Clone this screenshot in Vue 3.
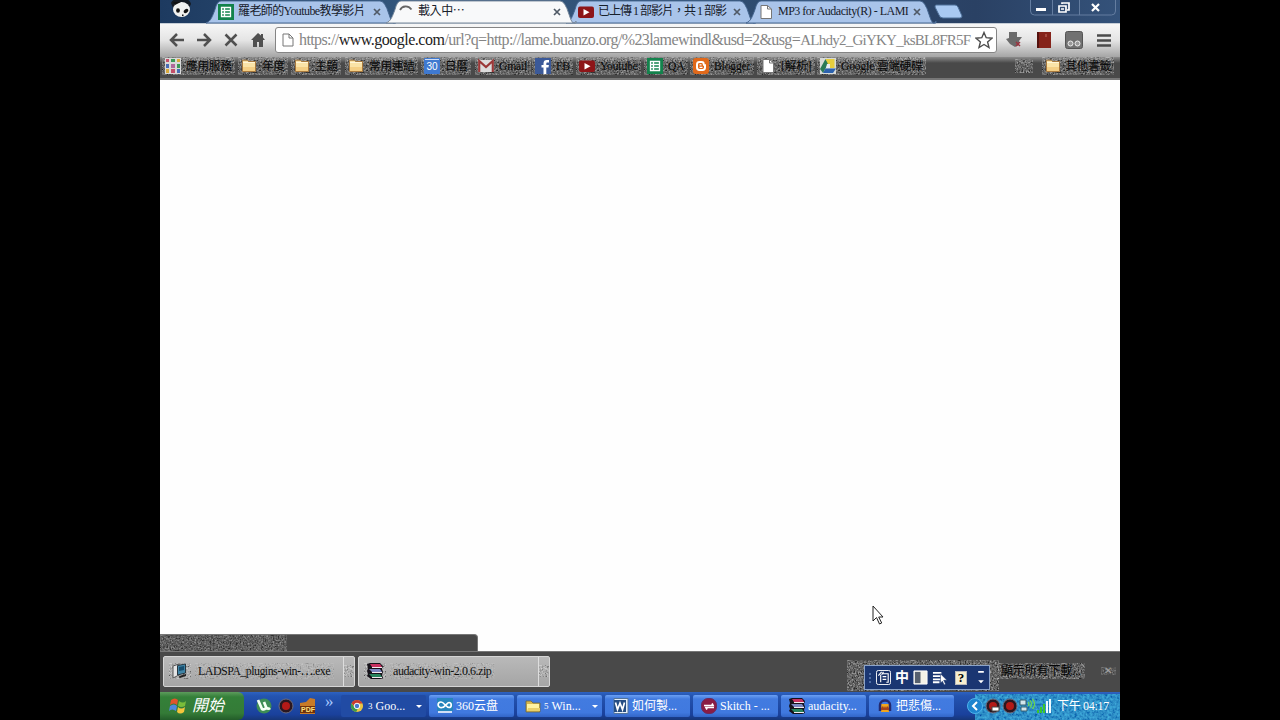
<template>
  <div class="screen">
    <svg class="sprite" width="0" height="0" aria-hidden="true">
      <defs>
        <filter id="grain" x="0" y="0" width="100%" height="100%">
          <feTurbulence type="fractalNoise" baseFrequency="0.6" numOctaves="2" seed="8" />
          <feColorMatrix
            values="2.4 0 0 0 -0.75  2.4 0 0 0 -0.75  2.4 0 0 0 -0.75  0 2.2 0 0 -0.5"
          />
        </filter>
        <filter id="grain-blue" x="0" y="0" width="100%" height="100%">
          <feTurbulence type="fractalNoise" baseFrequency="0.4" numOctaves="2" seed="3" />
          <feColorMatrix
            values="0.2 0 0 0 -0.05  1 0 0 0 -0.12  0.9 0 0 0 0.2  0 0 0 0 0.6"
          />
        </filter>
      </defs>
      <symbol id="sheet" viewBox="0 0 16 16">
        <path fill="#13824c" d="M0 0h16v16H0z" />
        <path fill="none" stroke="#fff" stroke-width="1.3" d="M3.5 3.5h9v9h-9zM3.5 6.5h9M3.5 9.5h9M6.5 3.5v9" />
      </symbol>
      <symbol id="spin" viewBox="0 0 16 16">
        <path fill="none" stroke="#666" stroke-width="1.8" d="M2 6C4 1.8 10 1 13.5 5.5" />
      </symbol>
      <symbol id="youtube" viewBox="0 0 16 16">
        <rect y="2.5" width="16" height="11.5" rx="2" fill="#8d1518" />
        <path fill="#fff" d="M5.5 5l6 3.2-6 3.3z" />
      </symbol>
      <symbol id="page" viewBox="0 0 16 16">
        <path fill="#fff" stroke="#777" d="M3 1.5h6.5L13.5 5v9.5H3z" />
        <path fill="none" stroke="#777" d="M9.5 1.5V5h4" />
      </symbol>
      <symbol id="apps" viewBox="0 0 16 16">
        <path fill="#d9d9d9" d="M0 0h16v16H0z" />
        <path fill="#c4506a" d="M1 1h3v3H1zM6 11h4v4H6z" />
        <path fill="#3a9a55" d="M6 1h4v3H6zM12 6h3v4h-3z" />
        <path fill="#d8a93c" d="M12 1h3v3h-3zM1 11h3v4H1z" />
        <path fill="#486db5" d="M1 6h3v4H1zM12 11h3v4h-3z" />
        <path fill="#b06a9c" d="M6 6h4v4H6z" />
      </symbol>
      <symbol id="folder" viewBox="0 0 16 16">
        <path fill="#fae3a7" stroke="#a9793c" d="M1.5 3.5V2.2h5l1 1.3h7v10h-13z" />
        <path fill="#f4cf85" d="M2 9h12v4H2z" />
        <path stroke="#fff6d8" d="M2 4.5h12" />
      </symbol>
      <symbol id="cal" viewBox="0 0 16 16">
        <rect width="16" height="16" rx="1" fill="#3f79d0" />
        <path fill="#cfdef7" d="M1 1h14v1H1z" />
      </symbol>
      <symbol id="gmail" viewBox="0 0 16 16">
        <path fill="#ddd" d="M0 2h16v12H0z" />
        <path fill="none" stroke="#9b3838" stroke-width="2.2" d="M1.2 14V3L8 9l6.8-6v11" />
      </symbol>
      <symbol id="facebook" viewBox="0 0 16 16">
        <path fill="#3b5998" d="M0 0h16v16H0z" />
        <path fill="#fff" d="M8.5 16V9.5h-2V7h2V5.4C8.5 3.2 9.7 2 11.7 2H14v2.5h-1.4c-1 0-1.3.4-1.3 1.2V7h2.6l-.4 2.5h-2.2V16z" />
      </symbol>
      <symbol id="blogger" viewBox="0 0 16 16">
        <rect width="16" height="16" rx="3" fill="#e0691b" />
        <path fill="none" stroke="#fff" stroke-width="2" d="M6.5 4h2.2c1.3 0 2 .8 2 2.2 0 .8.3 1 1.3 1v2.4c0 1.5-1 2.4-2.4 2.4H6.5C5 12 4 11 4 9.6V6.4C4 5 5 4 6.5 4z" />
        <path stroke="#fff" stroke-width="1.2" d="M6.5 6.8h2M6.5 9.3h3" />
      </symbol>
      <symbol id="drive" viewBox="0 0 16 16">
        <path fill="#d7dad8" d="M0 0h16v16H0z" />
        <path fill="#2b7a57" d="M5.5 1L0 11l3 4 5.5-10z" />
        <path fill="#e6cd3d" d="M5.5 1h9v9H10z" />
        <path fill="#2c62ae" d="M5.5 10.5H16L13 15H3z" />
        <path fill="#e9eef2" d="M7 6h3v4H6z" />
      </symbol>
      <symbol id="disc" viewBox="0 0 16 16">
        <path fill="#e4e4e4" stroke="#555" d="M1 3l6-2v11l-6 3z" />
        <path fill="#3f84a6" stroke="#273640" d="M5.5 2.5l8-1.5v9l-8 2z" />
        <path fill="#174e6e" d="M7 4l5-1v4L7 8z" />
        <path fill="#222" d="M7 13l7-2v2l-6 2z" />
      </symbol>
      <symbol id="books" viewBox="0 0 16 16">
        <path fill="#16121a" d="M0 1l3-1h10l3 3-1 3 1 3-1 3 1 3-3 1H4l-4-3 1-2-1-3 1-3z" />
        <path fill="#c73160" d="M3 1h10l2 3H5z" />
        <path fill="#f4eaf0" d="M5 4h10v1H5zM5 9h10v1H5zM5 14h10v1H5z" />
        <path fill="#7a86c0" d="M2 6h11l2 3H5z" />
        <path fill="#27845d" d="M2 11h11l2 3H5z" />
      </symbol>
      <symbol id="utorrent" viewBox="0 0 16 16">
        <circle cx="8" cy="8" r="7.5" fill="#3d8d55" />
        <path fill="none" stroke="#f4fff4" stroke-width="2.7" d="M2 2l4 9c2 1 4 0 4-2L8 4M10 9c1 2 3 2 4 1" />
      </symbol>
      <symbol id="rec" viewBox="0 0 16 16">
        <circle cx="8" cy="8" r="7" fill="#2b1720" stroke="#6b6c80" />
        <circle cx="8" cy="8" r="4" fill="#b31a18" />
      </symbol>
      <symbol id="pdf" viewBox="0 0 16 16">
        <path fill="#c97b26" d="M0 5l6-1 4-4 5 1v15H0z" />
        <path fill="#70310b" d="M0 8h15v7H0z" />
      </symbol>
      <symbol id="chrome" viewBox="0 0 16 16">
        <g transform="translate(1.5 1.5) scale(.81)">
          <circle cx="8" cy="8" r="7.5" fill="#e8c644" />
          <path fill="#c83b30" d="M1.3 4.5A7.5 7.5 0 0114.8 5H8L5 9z" />
          <path fill="#3d9a4b" d="M1.3 4.5L5 10l4 1-2 4.4A7.5 7.5 0 011.3 4.5z" />
          <circle cx="8" cy="8" r="3.4" fill="#4879cc" stroke="#fff" stroke-width="1.2" />
        </g>
      </symbol>
      <symbol id="cloud" viewBox="0 0 16 16">
        <path fill="#2786bc" d="M0 0h16v13H0z" />
        <path fill="none" stroke="#fff" stroke-width="1.7" d="M5 9.5C0 10 0 4 4 4c3 0 5 5.5 8 5.5s3-5 0-5c-2 0-4 5-7 5zM1 14h14" />
      </symbol>
      <symbol id="xpfolder" viewBox="0 0 16 16">
        <path fill="#d7b74d" stroke="#6b6540" stroke-width=".8" d="M1 3h5l2 2h7v9H1z" />
        <path fill="#fff3a0" d="M2 6h12v7H2z" />
        <path fill="#e9d06a" d="M3 10h12v3H2z" />
      </symbol>
      <symbol id="word" viewBox="0 0 16 16">
        <path fill="#e5eef8" stroke="#53749b" d="M1 .5h14v15H1z" />
        <path fill="#254d83" d="M1 2h12v12H1z" />
        <path fill="none" stroke="#fff" stroke-width="1.7" d="M2.5 4.5l2 7 2.5-6.5 2.5 6.5 2-7" />
      </symbol>
      <symbol id="skitch" viewBox="0 0 16 16">
        <rect x=".5" y=".5" width="15" height="15" rx="6.5" fill="#8a1c44" stroke="#6b2a5e" />
        <path fill="none" stroke="#fff" stroke-width="1.7" d="M3 7.5h9l-1-2M13 9.5H5l1 2" />
      </symbol>
      <symbol id="audacity" viewBox="0 0 16 16">
        <path fill="#f1a51d" d="M4 6h8v8H4z" />
        <path fill="none" stroke="#252a6e" stroke-width="2.5" d="M3 13V7C3 1 13 1 13 7v6" />
        <path fill="#a7431a" d="M4 10l2-2 1 2 1-2 1 2 1-2 2 2v2H4z" />
      </symbol>
    </svg>

    <div class="desktop">
      <header class="tabstrip">
        <svg class="avatar" viewBox="0 0 24 20">
          <path fill="#141a22" d="M2 3C5-4 20-4 22 4l-2 4H4z" />
          <ellipse cx="12.5" cy="9.5" rx="8.5" ry="7.5" fill="#f1f1ef" />
          <ellipse cx="9" cy="10.5" rx="1.9" ry="2.3" fill="#111" />
          <ellipse cx="17" cy="11" rx="2.6" ry="1.8" fill="#111" transform="rotate(-35 17 11)" />
          <path fill="#111" d="M13 14.5h1.5V16H13zM4 2h8L6 5z" />
        </svg>
        <div
          v-for="tab in tabs"
          :key="tab.title"
          class="tab"
          :class="{ active: tab.active }"
          :style="{ width: tab.width + 'px' }"
        >
          <svg class="tab-shape" :viewBox="`0 0 ${tab.width} 24`" preserveAspectRatio="none">
            <path
              :d="`M-2 24C3 22 4 18 7 10Q9 1 13 1H${tab.width - 8}Q${tab.width - 3} 1 ${tab.width + 1} 15T${tab.width + 8} 22V24Z`"
            />
          </svg>
          <svg class="ico"><use :href="'#' + tab.icon" /></svg>
          <span class="tab-title" :style="{ letterSpacing: tab.spacing + 'px' }">{{ tab.title }}</span>
          <svg class="tab-close" viewBox="0 0 8 8"><path d="M1 1l6 6M7 1L1 7" /></svg>
        </div>
        <svg class="new-tab" viewBox="0 0 30 15"><path d="M3 1h19q2 0 3 2l4 9q0 2-2 2H10q-3 0-4-3L2 3q0-2 1-2z" /></svg>
        <div class="win-btns">
          <svg viewBox="0 0 86 16">
            <path class="sep" d="M.5 0v11q0 4 4 4h77q4 0 4-4V0M22.5 0v15M49.5 0v15" />
            <path fill="#fff" d="M6 8h10v3H6z" />
            <path fill="none" stroke="#fff" stroke-width="1.7" d="M32 4V3h7v7h-2M29 6h7v6h-7zM31 9h3" />
            <path stroke="#fff" stroke-width="2.2" d="M62 4l7 7M69 4l-7 7" />
          </svg>
        </div>
      </header>

      <div class="toolbar">
        <svg class="nav" viewBox="0 0 16 16"><path d="M8 2L2 8l6 6M2 8h13" /></svg>
        <svg class="nav" viewBox="0 0 16 16"><path d="M8 2l6 6-6 6M14 8H1" /></svg>
        <svg class="nav" viewBox="0 0 16 16"><path d="M2.5 2.5l11 11M13.5 2.5l-11 11" /></svg>
        <svg class="nav home" viewBox="0 0 16 16"><path d="M8 1L1 8h2v7h4v-5h2v5h4V8h2l-2-2.5V2h-2v1.5z" /></svg>
        <div class="omnibox">
          <svg class="doc" viewBox="0 0 12 14">
            <path d="M1 1h6l4 4v8H1z" />
            <path d="M7 1v4h4" />
          </svg>
          <span class="url">https://<b>www.google.com</b>/url?q=http://lame.buanzo.org/%23lamewindl&amp;usd=2&amp;usg=<span class="token">ALhdy2_GiYKY_ksBL8FR5F</span></span>
          <svg class="star" viewBox="0 0 18 18"><path d="M9 1.5l2.2 5.2 5.8.5-4.4 3.7 1.4 5.6L9 13.5l-5 3 1.4-5.6L1 7.2l5.8-.5z" /></svg>
        </div>
        <svg class="ext" viewBox="0 0 18 18">
          <path fill="#6b6b6b" d="M4 1h8v5h5l-3 4v4l-4 2-5-3-4-5 3-1z" />
          <path stroke="#9b3440" stroke-width="1.5" d="M11 11l4 4M15 11l-4 4" />
        </svg>
        <svg class="ext" viewBox="0 0 18 18">
          <path fill="#85231a" d="M2 1h14v16H2z" />
          <path fill="#54120e" d="M2 1h2v16H2z" />
          <path fill="#a5483e" d="M10 3h2v3h-2z" />
        </svg>
        <svg class="ext" viewBox="0 0 18 18">
          <rect x=".5" y=".5" width="17" height="17" rx="2" fill="#717171" stroke="#555" />
          <circle cx="5.5" cy="12.5" r="2.5" fill="#999" stroke="#eee" />
          <circle cx="12.5" cy="12.5" r="2.5" fill="#999" stroke="#eee" />
        </svg>
        <svg class="ext menu" viewBox="0 0 18 18"><path d="M2 4.5h14M2 9.5h14M2 14.5h14" /></svg>
      </div>

      <nav class="bookmarks">
        <div
          v-for="item in bookmarks"
          :key="item.label"
          class="bookmark"
          :style="{ width: item.width + 'px' }"
        >
          <span class="mark grainy">
            <span class="ico-box">
              <svg class="ico"><use :href="'#' + item.icon" /></svg>
              <em v-if="item.badge">{{ item.badge }}</em>
            </span>
            <span>{{ item.label }}</span>
          </span>
        </div>
        <span class="overflow grainy"></span>
        <span class="mark grainy other">
          <svg class="ico"><use href="#folder" /></svg>
          <span>其他書籤</span>
        </span>
      </nav>

      <main class="page">
        <div class="status grainy"></div>
        <svg class="cursor" viewBox="0 0 12 20">
          <path d="M1 1v15l3.5-3.5 3 6.5 2.2-1-3-6H11z" />
        </svg>
      </main>

      <footer class="downloads">
        <div v-for="file in files" :key="file.name" class="file">
          <span class="file-icon grainy"><svg class="ico"><use :href="'#' + file.icon" /></svg></span>
          <span class="file-name grainy" :style="{ letterSpacing: file.spacing + 'px' }">{{ file.name }}</span>
          <span class="file-more"><span class="grainy"></span></span>
        </div>
        <span class="show-all grainy">顯示所有下載...</span>
        <span class="dismiss grainy">✕</span>
        <div class="ime-wrap grainy">
          <div class="ime">
            <i class="grip"></i>
            <svg viewBox="0 0 16 16">
              <rect x=".5" y=".5" width="15" height="15" rx="2" fill="#183068" stroke="#fff" />
              <path fill="none" stroke="#fff" stroke-width="1.2" d="M6 2L2.5 6M5 5v8M7 4h6v9h-2M7 7h4M7 10h4M8 2L6 5" />
            </svg>
            <b>中</b>
            <svg viewBox="0 0 16 16">
              <path fill="#f4f2e8" stroke="#fff" d="M1 1h14v14H1z" />
              <path fill="#56606e" d="M2 2h6v12H2z" />
            </svg>
            <svg viewBox="0 0 16 16">
              <path stroke="#fff" stroke-width="2" d="M1 3h9M1 6.5h9M1 10h9M1 13h7" />
              <path fill="#fff" stroke="#183068" stroke-width=".6" d="M9 4v10l2-2 2 4 1.5-1-2-4H16z" />
            </svg>
            <span class="help">?</span>
            <svg class="ime-more" viewBox="0 0 8 16"><path fill="#fff" d="M1 1h6v2H1zM1 11h6l-3 3z" /></svg>
          </div>
        </div>
      </footer>

      <div class="taskbar">
        <div class="start">
          <svg viewBox="0 0 18 18">
            <path fill="#e2542b" d="M2 3q4-3 7 0L8 8Q5 5 1 8z" />
            <path fill="#78bd3a" d="M10 4q4 3 7 0l-1 5q-4 2-7 0z" />
            <path fill="#5088de" d="M1 9q4-3 7 0l-1 5q-4-3-7 0z" />
            <path fill="#f4c53c" d="M9 10q3 3 7 0l-1 5q-4 3-7 0z" />
          </svg>
          <span>開始</span>
        </div>
        <div class="quick">
          <svg class="ico"><use href="#utorrent" /></svg>
          <svg class="ico"><use href="#rec" /></svg>
          <span class="ico-box">
            <svg class="ico"><use href="#pdf" /></svg>
            <em class="pdf">PDF</em>
          </span>
          <span class="more">»</span>
        </div>
        <div class="tasks">
          <div v-for="task in tasks" :key="task.label" class="task" :class="{ pressed: task.pressed }">
            <svg class="ico"><use :href="'#' + task.icon" /></svg>
            <small v-if="task.count">{{ task.count }}</small>
            <span>{{ task.label }}</span>
            <i v-if="task.count" class="caret"></i>
          </div>
        </div>
        <div class="tray">
          <svg class="chev" viewBox="0 0 16 16">
            <circle cx="8" cy="8" r="7.5" fill="#1d84cf" stroke="#4eb3ea" />
            <path fill="none" stroke="#fff" stroke-width="2" d="M10 4L6 8l4 4" />
          </svg>
          <svg class="ico"><use href="#rec" /><path fill="#fff" stroke="#444" d="M7 9h7v4H7z" /></svg>
          <svg class="ico"><use href="#rec" /></svg>
          <svg class="ico" viewBox="0 0 16 16">
            <path fill="#d3e5ec" stroke="#355c6d" d="M1 2h6v5H1zM2 9h6v4H2z" />
            <path fill="none" stroke="#69d257" stroke-width="1.3" d="M9 4q2 2 0 4M11 2.5q3 3.5 0 7M13.5 1q4 5 0 10" />
          </svg>
          <svg class="ico" viewBox="0 0 16 16">
            <path stroke="#39c62b" stroke-width="2" d="M2 15v-3M5 15V9M8 15V6" />
            <path stroke="#effaff" stroke-width="2" d="M11 15V3M14 15V1" />
          </svg>
          <span class="clock">下午 04:17</span>
        </div>
      </div>
    </div>
  </div>
</template>

<script setup>
const tabs = [
  { icon: "sheet", title: "羅老師的Youtube教學影片", width: 180, spacing: -0.6 },
  { icon: "spin", title: "載入中⋯", width: 180, spacing: -0.4, active: true },
  { icon: "youtube", title: "已上傳 1 部影片，共 1 部影", width: 180, spacing: -1 },
  { icon: "page", title: "MP3 for Audacity(R) - LAMI", width: 180, spacing: -0.5 },
];

// width: distance to the next bookmark
const bookmarks = [
  { icon: "apps", label: "應用服務", width: 76 },
  { icon: "folder", label: "年度", width: 53 },
  { icon: "folder", label: "主題", width: 54 },
  { icon: "folder", label: "常用連結", width: 76 },
  { icon: "cal", label: "日曆", width: 54, badge: "30" },
  { icon: "gmail", label: "Gmail", width: 57 },
  { icon: "facebook", label: "FB", width: 44 },
  { icon: "youtube", label: "Youtube", width: 68 },
  { icon: "sheet", label: "QA", width: 46 },
  { icon: "blogger", label: "Blogger", width: 67 },
  { icon: "page", label: "[解析]", width: 60 },
  { icon: "drive", label: "Google 雲端硬碟", width: 102 },
];

const files = [
  { icon: "disc", name: "LADSPA_plugins-win-⋯.exe", spacing: -0.55 },
  { icon: "books", name: "audacity-win-2.0.6.zip", spacing: -0.45 },
];

const tasks = [
  { icon: "chrome", count: "3", label: "Goo...", pressed: true },
  { icon: "cloud", label: "360云盘" },
  { icon: "xpfolder", count: "5", label: "Win..." },
  { icon: "word", label: "如何製..." },
  { icon: "skitch", label: "Skitch - ..." },
  { icon: "books", label: "audacity..." },
  { icon: "audacity", label: "把悲傷..." },
];
</script>

<style>
body {
  background: #000;
  overflow: hidden;
}
</style>

<style scoped>
* {
  box-sizing: border-box;
}
.screen {
  width: 1280px;
  height: 720px;
  background: #000;
  display: flex;
  justify-content: center;
  font-family: "Liberation Serif", "Noto Sans CJK TC", serif;
  font-size: 12px;
  line-height: 16px;
  white-space: nowrap;
}
.sprite {
  position: absolute;
}
svg {
  flex-shrink: 0;
}
.ico {
  width: 16px;
  height: 16px;
}
.ico-box {
  position: relative;
  display: flex;
}
.ico-box em {
  position: absolute;
  left: 0;
  top: 1px;
  width: 16px;
  color: #fff;
  font: 10px/15px "Liberation Sans", sans-serif;
  letter-spacing: 0;
  text-align: center;
}
.ico-box .pdf {
  top: 4px;
  color: #ffe17c;
  font-size: 7px;
  font-weight: 700;
}
.desktop {
  width: 960px;
  height: 720px;
  display: flex;
  flex-direction: column;
  overflow: hidden;
  background: #fff;
}
.grainy {
  position: relative;
  isolation: isolate;
}
.grainy::before {
  content: "";
  position: absolute;
  inset: 0 -3px;
  z-index: -1;
  filter: url(#grain);
  opacity: 0.5;
}

/* tabs */
.tabstrip {
  height: 23px;
  display: flex;
  background: linear-gradient(90deg, #1d3a60, #35597f 28%, #2d496d 70%, #2a4164 85%, #34527a);
}
.avatar {
  width: 24px;
  height: 20px;
  margin: 0 15px 0 9px;
}
.tab {
  position: relative;
  display: flex;
  align-items: center;
  padding: 0 7px 0 10px;
  color: #17202b;
}
.tab.active {
  z-index: 2;
}
.tab-shape {
  position: absolute;
  left: 0;
  top: 0;
  width: 100%;
  height: 23px;
  overflow: visible;
}
.tab-shape path {
  fill: #a9c4ea;
  stroke: #45658f;
  stroke-width: 1;
}
.tab.active .tab-shape path {
  fill: #f8f9fa;
  stroke: #75869a;
}
.tab .ico {
  position: relative;
}
.tab-title {
  position: relative;
  flex: 1;
  width: 0;
  padding-left: 4px;
  margin-top: -1px;
  font-size: 12px;
}
.tab-close {
  position: relative;
  width: 8px;
  height: 8px;
  margin-top: 1px;
}
.tab-close path {
  stroke: #505a66;
  stroke-width: 1.7;
}
.new-tab {
  width: 30px;
  height: 15px;
  margin: 4px 0 0 5px;
}
.new-tab path {
  fill: #a9c9f1;
  stroke: #4e7099;
}
.win-btns {
  margin: 0 4px 0 auto;
  height: 16px;
}
.win-btns svg {
  width: 86px;
  height: 16px;
}
.sep {
  fill: none;
  stroke: #647da0;
}

/* toolbar */
.toolbar {
  height: 34px;
  display: flex;
  align-items: center;
  padding: 0 5px 1px 9px;
  background: linear-gradient(#f7f7f7, #e4e4e4 50%, #a5a5a5);
  border-top: 1px solid #c5cdd6;
}
.nav {
  width: 16px;
  height: 16px;
  margin-right: 11px;
}
.nav path {
  fill: none;
  stroke: #505050;
  stroke-width: 2.5;
}
.nav.home {
  margin-right: 9px;
}
.nav.home path {
  fill: #505050;
  stroke: none;
}
.omnibox {
  width: 722px;
  height: 26px;
  display: flex;
  align-items: center;
  background: #fff;
  border: 1px solid #858585;
  border-radius: 3px;
  padding: 0 3px 0 6px;
}
.doc {
  width: 12px;
  height: 14px;
}
.doc path {
  fill: none;
  stroke: #777;
}
.url {
  flex: 1;
  width: 0;
  margin-left: 5px;
  font-size: 16px;
  line-height: 22px;
  letter-spacing: -0.6px;
  color: #858585;
}
.url b {
  font-weight: 400;
  letter-spacing: -0.5px;
  color: #222;
}
.token {
  font-size: 15px;
  letter-spacing: -0.75px;
}
.star {
  width: 18px;
  height: 18px;
}
.star path {
  fill: #fff;
  stroke: #4d4d4d;
  stroke-width: 1.4;
}
.ext {
  width: 18px;
  height: 18px;
  margin-left: 12px;
}
.omnibox + .ext {
  margin-left: 8px;
}
.menu path {
  stroke: #4b4b4b;
  stroke-width: 2.5;
}

/* bookmarks */
.bookmarks {
  height: 23px;
  display: flex;
  align-items: center;
  padding: 0 9px 3px 5px;
  color: #080808;
  background: linear-gradient(#8b8b8b, #606060 4px, #494949 6px);
  border-bottom: 2px solid #777;
}
.bookmark {
  height: 18px;
}
.mark {
  display: inline-flex;
  align-items: center;
  height: 18px;
  gap: 5px;
  font-size: 11.5px;
  letter-spacing: -0.1px;
}
.overflow {
  width: 12px;
  height: 14px;
  margin: 0 15px 0 auto;
}
.other {
  gap: 4px;
}

/* page */
.page {
  position: relative;
  flex: 1;
  display: flex;
  align-items: flex-end;
  background: #fefefe;
}
.status {
  width: 318px;
  height: 17px;
  background: #484848;
  border-top: 1px solid #777;
  border-right: 1px solid #777;
  border-radius: 0 4px 0 0;
}
.status::before {
  right: 190px;
  left: 0;
  opacity: 0.4;
}
.cursor {
  position: absolute;
  left: 712px;
  top: 525px;
  width: 12px;
  height: 20px;
}
.cursor path {
  fill: #fff;
  stroke: #222;
}

/* downloads */
.downloads {
  position: relative;
  height: 41px;
  display: flex;
  align-items: center;
  padding: 0 7px 2px 3px;
  background: #494949;
  border-top: 1px solid #777;
}
.file {
  width: 192px;
  height: 31px;
  margin-right: 3px;
  display: flex;
  align-items: center;
  background: linear-gradient(#b9b9b9, #a5a5a5);
  border: 1px solid #d5d5d5;
  border-radius: 2px;
  color: #101010;
}
.file-icon {
  display: flex;
  margin-left: 8px;
}
.file-name {
  margin-left: 10px;
}
.file-name::before {
  opacity: 0.22;
}
.file-more {
  width: 11px;
  height: 29px;
  margin-left: auto;
  border-left: 1px solid #ddd;
  display: flex;
  align-items: center;
  justify-content: center;
}
.file-more span {
  width: 4px;
  height: 12px;
}
.show-all {
  margin-left: auto;
  margin-right: 23px;
  font-size: 12px;
  letter-spacing: -0.1px;
  color: #060606;
}
.dismiss {
  width: 9px;
  color: #a5a5a5;
  font-size: 10px;
}
.dismiss::before {
  inset: 4px -3px;
  opacity: 0.3;
}
.ime-wrap {
  position: absolute;
  left: 690px;
  top: 8px;
  width: 146px;
  height: 31px;
  padding: 5px 6px 0 14px;
}
.ime {
  height: 25px;
  display: flex;
  align-items: center;
  gap: 4px;
  padding: 0 4px;
  background: #1a3672;
  border: 1px solid #8ba3c8;
}
.ime svg {
  width: 15px;
  height: 15px;
}
.ime b {
  font-size: 14px;
  color: #fff;
}
.grip {
  width: 3px;
  height: 10px;
  border-left: 2px dotted #4f6da5;
}
.help {
  width: 13px;
  height: 14px;
  margin: 0 6px 0 4px;
  background: #f6efd0;
  border: 1px solid #bbb;
  color: #000;
  font-weight: 700;
  font-size: 13px;
  line-height: 12px;
  text-align: center;
}
.ime .ime-more {
  width: 8px;
}

/* taskbar */
.taskbar {
  height: 28px;
  display: flex;
  align-items: stretch;
  background: linear-gradient(#2e62c1, #2454b0 4px, #1a419c 80%, #173678);
  color: #fff;
}
.start {
  width: 84px;
  display: flex;
  align-items: center;
  padding-left: 9px;
  gap: 5px;
  background: linear-gradient(#5d9b5c, #348039 5px, #347b37 75%, #235c29);
  border-radius: 0 6px 6px 0;
  font-size: 16px;
  font-style: italic;
}
.start svg {
  width: 18px;
  height: 18px;
}
.quick {
  width: 97px;
  display: flex;
  align-items: center;
  padding-left: 12px;
  gap: 6px;
}
.more {
  font-size: 17px;
  color: #a9c9ff;
  margin: -8px 0 0 3px;
}
.tasks {
  display: flex;
  gap: 3px;
  padding: 3px 0;
}
.task {
  width: 85px;
  display: flex;
  align-items: center;
  padding: 0 4px 0 8px;
  gap: 3px;
  background: linear-gradient(#6ba0f3, #427be0 4px, #4079df 80%, #3265c7);
  border-radius: 2px;
  font-size: 12px;
}
.task.pressed {
  background: #214ba4;
}
.task small {
  font-size: 9px;
}
.caret {
  margin-left: auto;
  border: 3px solid transparent;
  border-top-color: #fff;
  border-bottom: 0;
}
.tray {
  position: relative;
  isolation: isolate;
  width: 153px;
  margin-left: auto;
  display: flex;
  align-items: center;
  gap: 1px;
}
.tray::before {
  content: "";
  position: absolute;
  inset: 2px 0 0 8px;
  z-index: -1;
  filter: url(#grain-blue);
}
.tray::after {
  content: "";
  position: absolute;
  inset: 2px 0 0 8px;
  z-index: -2;
  background: #1670b8;
}
.chev {
  width: 16px;
  height: 16px;
  margin-right: 1px;
}
.clock {
  margin-left: 4px;
  font-size: 12px;
  letter-spacing: -0.3px;
}
</style>
